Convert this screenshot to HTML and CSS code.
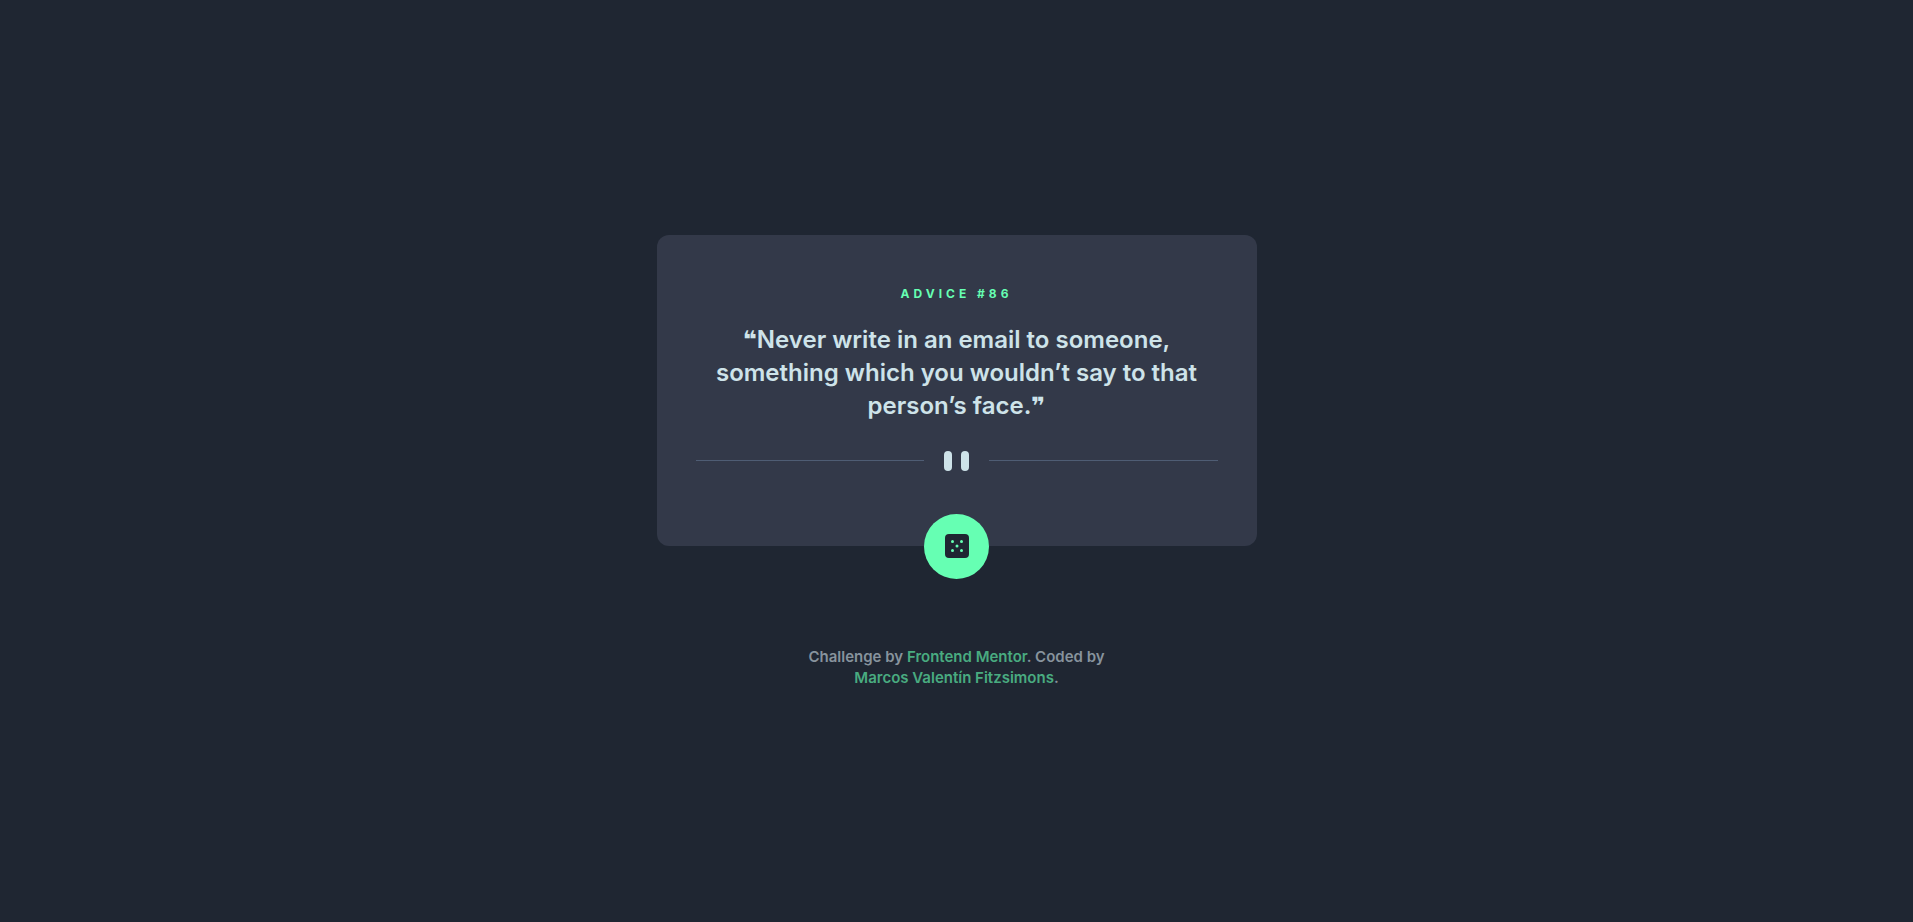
FILE: index.html
```html
<!DOCTYPE html>
<html lang="en">
<head>
<meta charset="utf-8">
<meta name="viewport" content="width=device-width, initial-scale=1">
<title>Advice generator</title>
<link rel="stylesheet" href="styles.css">
</head>
<body>
<main class="card">
  <h1 class="card-title">Advice #86</h1>
  <p class="card-quote">❝Never write in an email to someone, something which you wouldn’t say to that person’s face.❞</p>
  <div class="divider" aria-hidden="true">
    <svg width="25" height="20" viewBox="0 0 25 20" fill="#cee3e9">
      <rect width="8" height="20" rx="4"/>
      <rect x="17" width="8" height="20" rx="4"/>
    </svg>
  </div>
  <button class="dice" type="button" aria-label="New advice">
    <svg width="24" height="24" viewBox="0 0 24 24" aria-hidden="true">
      <rect width="24" height="24" rx="4" fill="#1f2632"/>
      <g fill="#66ffb3">
        <circle cx="7.5" cy="7.5" r="1.5"/>
        <circle cx="16.5" cy="7.5" r="1.5"/>
        <circle cx="12" cy="12" r="1.5"/>
        <circle cx="7.5" cy="16.5" r="1.5"/>
        <circle cx="16.5" cy="16.5" r="1.5"/>
      </g>
    </svg>
  </button>
</main>
<footer class="attribution">
  Challenge by <a href="#">Frontend Mentor</a>. Coded by <a href="#">Marcos Valentín Fitzsimons</a>.
</footer>
</body>
</html>
```
FILE: styles.css
```css
* {
  box-sizing: border-box;
  margin: 0;
}

body {
  min-height: 100vh;
  display: flex;
  flex-direction: column;
  align-items: center;
  justify-content: center;
  gap: 100px;
  background: #1f2632;
  color: #cee3e9;
  font-family: Inter, "DejaVu Sans", sans-serif;
  text-align: center;
}

.card {
  position: relative;
  width: 100%;
  max-width: 600px;
  padding: 51px 39px 75px;
  border-radius: 12px;
  background: #333949;
}

.card-title {
  margin-bottom: 21px;
  color: #66ffb3;
  font-size: 12px;
  font-weight: 700;
  line-height: 16px;
  letter-spacing: 4px;
  text-transform: uppercase;
}

.card-quote {
  margin-bottom: 29px;
  font-size: 24px;
  font-weight: 600;
  line-height: 33px;
}

.divider {
  display: flex;
  align-items: center;
  gap: 20px;
}

.divider::before,
.divider::after {
  content: "";
  flex: 1;
  height: 1px;
  background: #4f5d74;
}

.dice {
  position: absolute;
  left: 0;
  right: 0;
  bottom: -33px;
  display: grid;
  place-items: center;
  width: 65px;
  height: 65px;
  margin: 0 auto;
  padding: 0;
  border: 0;
  border-radius: 50%;
  background: #66ffb3;
  cursor: pointer;
}

.attribution {
  max-width: 320px;
  color: #87939d;
  font-size: 15px;
  font-weight: 600;
  line-height: 21px;
}

.attribution a {
  color: #49ab80;
  text-decoration: none;
}
```
